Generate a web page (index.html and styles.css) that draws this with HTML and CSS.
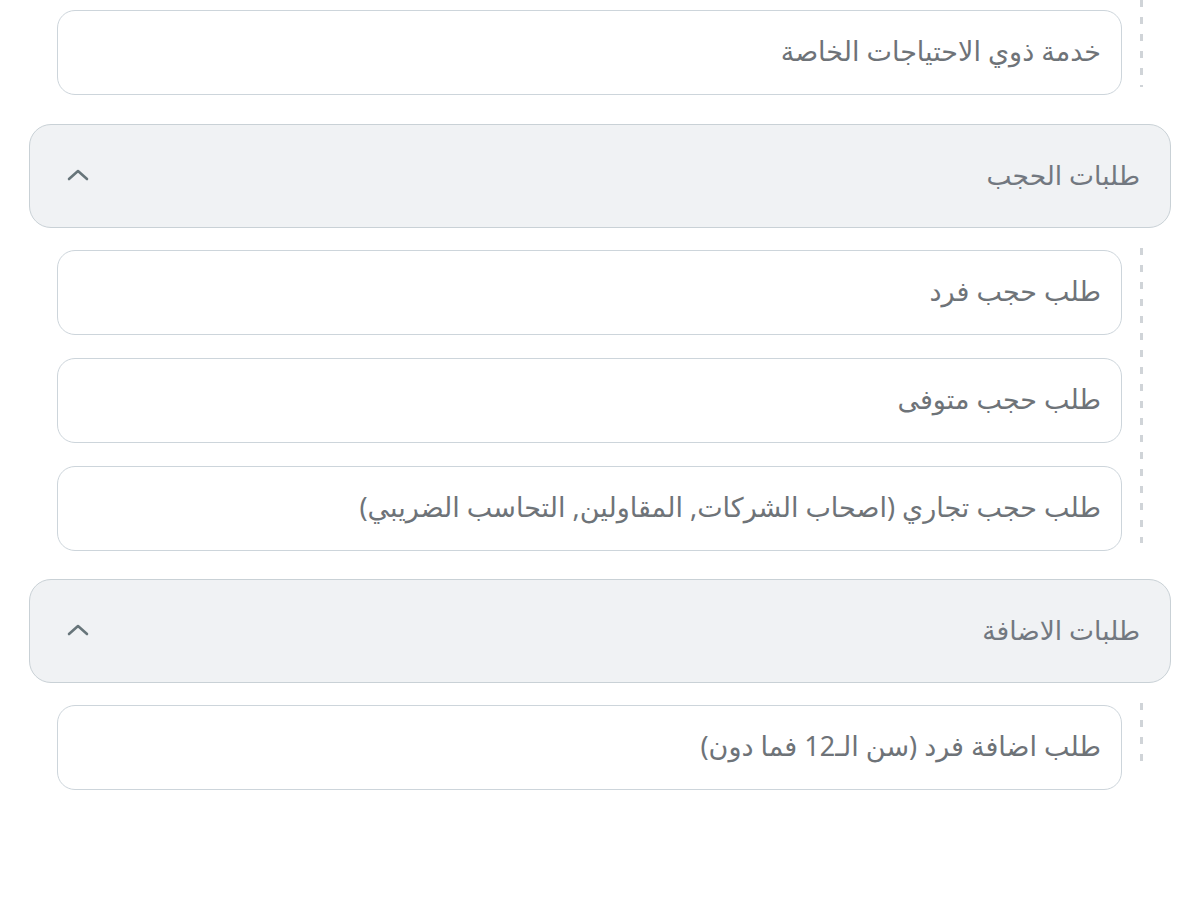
FILE: index.html
```html
<!DOCTYPE html>
<html lang="ar" dir="rtl">
<head>
  <meta charset="UTF-8" />
  <title>الطلبات</title>
  <meta name="viewport" content="width=device-width, initial-scale=1.0" />
  <link rel="stylesheet" href="styles.css">
</head>
<body>
  <div class="group">
    <div class="items items-top">
      <div class="item">خدمة ذوي الاحتياجات الخاصة</div>
    </div>
  </div>

  <div class="group">
    <div class="group-head">
      <span>طلبات الحجب</span>
      <svg class="chev" width="22" height="14" viewBox="0 0 22 14"><path d="M2 11 L11 3 L20 11" fill="none" stroke="#67757a" stroke-width="2.6" stroke-linecap="round" stroke-linejoin="round"/></svg>
    </div>
    <div class="items">
      <div class="item">طلب حجب فرد</div>
      <div class="item">طلب حجب متوفى</div>
      <div class="item">طلب حجب تجاري (اصحاب الشركات, المقاولين, التحاسب الضريبي)</div>
    </div>
  </div>

  <div class="group">
    <div class="group-head">
      <span>طلبات الاضافة</span>
      <svg class="chev" width="22" height="14" viewBox="0 0 22 14"><path d="M2 11 L11 3 L20 11" fill="none" stroke="#67757a" stroke-width="2.6" stroke-linecap="round" stroke-linejoin="round"/></svg>
    </div>
    <div class="items items-short">
      <div class="item">طلب اضافة فرد (سن الـ12 فما دون)</div>
    </div>
  </div>
</body>
</html>
```

FILE: styles.css
```css
body {
  margin: 0;
  background: #fff;
  font-family: "Noto Sans", "DejaVu Sans", sans-serif;
  color: #6e7378;
}
.group {
  margin: 0 29px 29px;
}
.group:nth-child(2) {
  margin-bottom: 28px;
}
.group-head {
  display: flex;
  align-items: center;
  justify-content: space-between;
  box-sizing: border-box;
  height: 104px;
  padding: 0 30px 3px 37px;
  background: #f0f2f4;
  border: 1px solid #c9d1d6;
  border-radius: 22px;
  font-size: 26.5px;
  color: #727880;
}
.chev {
  display: block;
}
.items {
  position: relative;
  display: flex;
  flex-direction: column;
  gap: 23px;
  margin-top: 20px;
  padding: 2px 49px 0 28px;
}
/* dashed guide line on the right */
.items::before {
  content: "";
  position: absolute;
  top: 0;
  right: 28px;
  bottom: 8px;
  width: 3px;
  background: linear-gradient(to bottom, #d0d4d8 0 7px, transparent 7px 17px);
  background-size: 3px 17px;
}
.items-top {
  margin-top: 0;
  padding-top: 10px;
}
.items-short::before {
  bottom: 25px;
}
.item {
  display: flex;
  align-items: center;
  box-sizing: border-box;
  height: 85px;
  padding: 0 20px 5px;
  background: #fff;
  border: 1px solid #cdd5db;
  border-radius: 18px;
  font-size: 27px;
}
```
